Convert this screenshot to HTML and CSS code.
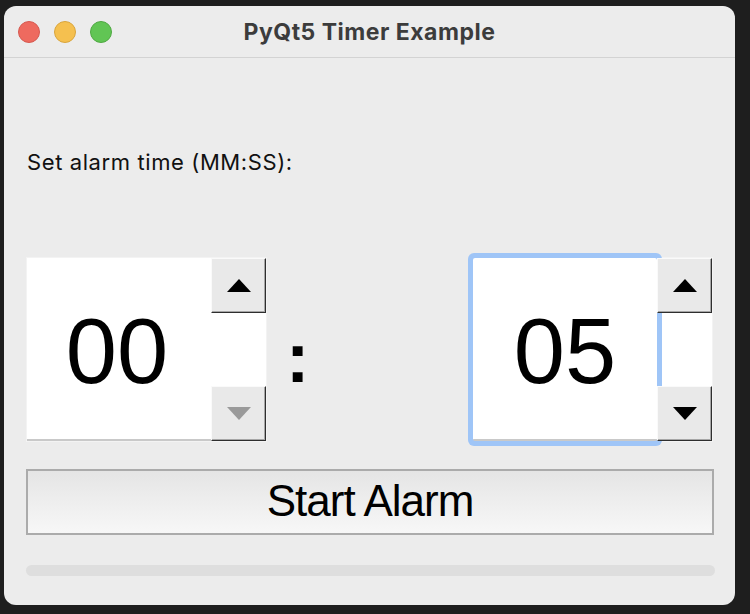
FILE: index.html
```html
<!DOCTYPE html>
<html lang="en">

<head>
 <meta charset="UTF-8">
 <title>PyQt5 Timer Example</title>
 <link rel="stylesheet" href="styles.css">
</head>

<body>

 <section class="window">
  <header class="titlebar">
   <div class="lights">
    <span class="light red"></span>
    <span class="light yellow"></span>
    <span class="light green"></span>
   </div>
   <h1 class="title">PyQt5 Timer Example</h1>
  </header>

  <main class="content">
   <p class="label">Set alarm time (MM:SS):</p>

   <div class="spin-row">
    <div class="spin">
     <div class="field">00</div>
     <div class="arrows">
      <button class="arrow">
       <svg width="24" height="13" viewBox="0 0 24 13"><polygon points="12,0 24,13 0,13" fill="#000" /></svg>
      </button>
      <button class="arrow">
       <svg width="24" height="13" viewBox="0 0 24 13"><polygon points="0,0 24,0 12,13" fill="#9a9a9a" /></svg>
      </button>
     </div>
    </div>

    <span class="colon">:</span>

    <div class="spin focused">
     <div class="field">05</div>
     <div class="arrows">
      <button class="arrow">
       <svg width="24" height="13" viewBox="0 0 24 13"><polygon points="12,0 24,13 0,13" fill="#000" /></svg>
      </button>
      <button class="arrow">
       <svg width="24" height="13" viewBox="0 0 24 13"><polygon points="0,0 24,0 12,13" fill="#000" /></svg>
      </button>
     </div>
    </div>
   </div>

   <button class="start">Start Alarm</button>

   <div class="progress"></div>
  </main>
 </section>

</body>

</html>
```

FILE: styles.css
```css
*,
*::before,
*::after {
 box-sizing: border-box;
}

body {
 margin: 0;
 width: 750px;
 height: 614px;
 padding: 6px 0 0 4px;
 background: #1e1e1e;
 font-family: "Liberation Sans", Arial, sans-serif;
 overflow: hidden;
}

.window {
 width: 731px;
 height: 599px;
 background: #ececec;
 border-radius: 12px;
 display: flex;
 flex-direction: column;
 overflow: hidden;
}

.titlebar {
 height: 52px;
 border-bottom: 1px solid #d3d3d3;
 display: grid;
 grid-template-columns: 1fr auto 1fr;
 align-items: center;
}

.lights {
 display: flex;
 gap: 14px;
 padding-left: 14px;
}

.light {
 width: 22px;
 height: 22px;
 border-radius: 50%;
}

.red {
 background: #ee6a5f;
 border: 1px solid #d65950;
}

.yellow {
 background: #f5c04f;
 border: 1px solid #d9a53c;
}

.green {
 background: #61c554;
 border: 1px solid #4fa942;
}

.title {
 margin: 0;
 font-family: Inter, "Liberation Sans", sans-serif;
 font-size: 23px;
 font-weight: 700;
 color: #3c3c3c;
 letter-spacing: .5px;
}

.content {
 display: flex;
 flex-direction: column;
 padding: 0 21px 0 22px;
}

.label {
 margin: 92px 0 0 1px;
 font-family: Inter, "Liberation Sans", sans-serif;
 font-size: 22px;
 line-height: 24px;
 letter-spacing: .6px;
 color: #111;
}

.spin-row {
 display: flex;
 align-items: center;
 height: 192px;
 margin-top: 79px;
}

.spin {
 display: flex;
 height: 185px;
 background: #fff;
 border: 1px solid #f3f3f3;
}

.focused {
 margin-left: auto;
 margin-right: 1px;
}

.field {
 width: 184px;
 display: flex;
 align-items: center;
 justify-content: center;
 font-size: 92px;
 color: #000;
 background: #fff;
 border-bottom: 2px solid #c9c9c9;
 padding: 6px 4px 0 0;
}

.focused .field {
 border-radius: 2px;
 box-shadow: 0 0 0 5px #9fc5f7;
 padding-right: 0;
}

.arrows {
 width: 55px;
 display: flex;
 flex-direction: column;
 justify-content: space-between;
}

.arrow {
 height: 55px;
 padding: 0;
 margin: 0;
 display: flex;
 align-items: center;
 justify-content: center;
 background: #e9e9e9;
 border: 1px solid;
 border-color: #fafafa #2e2e2e #2e2e2e #fafafa;
 box-shadow: inset -1px -1px 0 #a6a6a6;
}

.colon {
 margin-left: 19px;
 font-size: 70px;
 font-weight: 700;
 line-height: 1;
 padding-top: 18px;
}

.start {
 margin-top: 24px;
 height: 66px;
 width: 688px;
 border: 2px solid #ababab;
 background: linear-gradient(#e5e5e5, #f7f7f7);
 font-family: "Liberation Sans", Arial, sans-serif;
 font-size: 44px;
 letter-spacing: -1px;
 color: #000;
 padding: 0 0 2px;
}

.progress {
 margin-top: 30px;
 height: 11px;
 width: 689px;
 border-radius: 6px;
 background: #dedede;
}
```
